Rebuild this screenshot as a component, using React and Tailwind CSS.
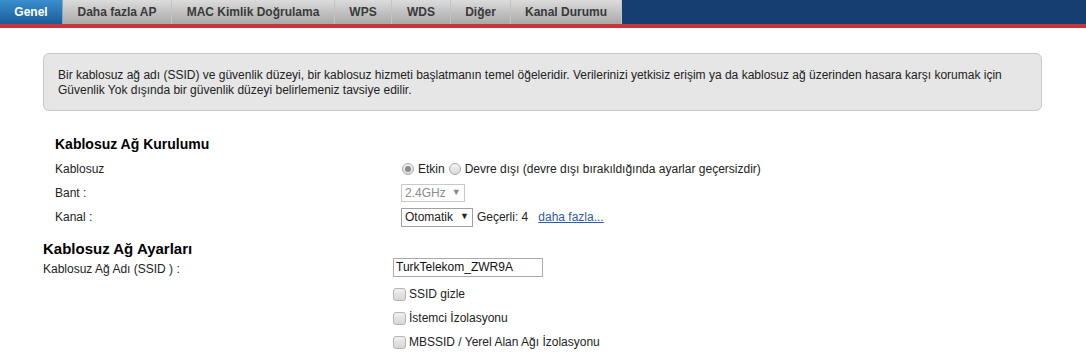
import React from "react";

const tabs = [
    { label: "Genel", w: "w-[63px]", active: true },
    { label: "Daha fazla AP", w: "w-[109px]" },
    { label: "MAC Kimlik Doğrulama", w: "w-[163px]" },
    { label: "WPS", w: "w-[57px]" },
    { label: "WDS", w: "w-[59px]" },
    { label: "Diğer", w: "w-[60px]" },
    { label: "Kanal Durumu", w: "w-[111px]" },
];

function Radio({ checked }) {
    return (
        <span className="inline-flex items-center justify-center w-[12px] h-[12px] rounded-full border border-[#a9a9a9] bg-gradient-to-b from-[#f4f4f4] to-[#d9d9d9]">
            {checked && <span className="w-[6px] h-[6px] rounded-full bg-[#8c8c8c]" />}
        </span>
    );
}

function Checkbox({ label }) {
    return (
        <div className="flex items-center h-[24px]">
            <span className="w-[13px] h-[13px] rounded-[3px] border border-[#b5b5b5] bg-gradient-to-b from-[#f0f0f0] to-[#d6d6d6] mr-[3px]" />
            <span>{label}</span>
        </div>
    );
}

export default function App() {
    return (
        <div className="w-[1086px] h-[360px] bg-white text-[12px] text-[#333] overflow-hidden" style={{ fontFamily: "Arial, 'Liberation Sans', sans-serif" }}>
            <div className="flex h-[24px] bg-[#163e6f]">
                {tabs.map((t, i) => (
                    <div
                        key={i}
                        className={
                            t.active
                                ? `${t.w} flex items-center justify-center font-bold text-white bg-gradient-to-b from-[#3a8fcf] to-[#1b5c97] border-r border-[#8aa6bf]`
                                : `${t.w} flex items-center justify-center font-bold text-[#3a3a3a] bg-gradient-to-b from-[#dcdcdc] to-[#a9a9a9] border-r border-[#c4c4c4]`
                        }
                    >
                        {t.label}
                    </div>
                ))}
            </div>
            <div className="h-[4px] bg-[#c9343a]" />

            <div className="pl-[43px] pr-[44px] pt-[25px]">
                <div className="rounded-[6px] border border-[#c8c8c8] bg-[#e6e6e6] px-[14px] pt-[14px] pb-[12px] h-[58px] leading-[15px] text-[#222]">
                    <p>Bir kablosuz ağ adı (SSID) ve güvenlik düzeyi, bir kablosuz hizmeti başlatmanın temel öğeleridir. Verilerinizi yetkisiz erişim ya da kablosuz ağ üzerinden hasara karşı korumak için</p>
                    <p>Güvenlik Yok dışında bir güvenlik düzeyi belirlemeniz tavsiye edilir.</p>
                </div>
            </div>

            <div className="pl-[55px] pt-[24px] text-[#222]">
                <h3 className="font-bold text-[14px] text-black h-[18px] leading-[18px]">Kablosuz Ağ Kurulumu</h3>
                <div className="flex items-center h-[24px] mt-[4px]">
                    <span className="w-[347px]">Kablosuz</span>
                    <span className="flex items-center gap-[4px]">
                        <Radio checked />
                        <span>Etkin</span>
                        <Radio />
                        <span>Devre dışı (devre dışı bırakıldığında ayarlar geçersizdir)</span>
                    </span>
                </div>
                <div className="flex items-center h-[24px]">
                    <span className="w-[346px]">Bant :</span>
                    <span className="flex items-center h-[18px] border border-[#c9c9c9] px-[3px] text-[#8a8a8a] bg-white">
                        2.4GHz <span className="ml-[6px] text-[9px]">▼</span>
                    </span>
                </div>
                <div className="flex items-center h-[24px]">
                    <span className="w-[346px]">Kanal :</span>
                    <span className="flex items-center h-[19px] border border-[#a0a0a0] px-[3px] text-[#222] bg-white">
                        Otomatik <span className="ml-[7px] text-[9px]">▼</span>
                    </span>
                    <span className="ml-[4px]">Geçerli: 4</span>
                    <a href="#" className="ml-[10px] text-[#2c5ca8] underline">daha fazla...</a>
                </div>
            </div>

            <div className="pl-[43px] pt-[11px] text-[#222]">
                <h3 className="font-bold text-[15px] text-black h-[18px] leading-[18px]">Kablosuz Ağ Ayarları</h3>
                <div className="flex items-center h-[21px]">
                    <span className="w-[350px]">Kablosuz Ağ Adı (SSID ) :</span>
                    <span className="flex items-center h-[19px] w-[150px] border border-[#a9a9a9] px-[2px] bg-white text-[#111] -mt-[3px]">TurkTelekom_ZWR9A</span>
                </div>
                <div className="pl-[350px] pt-[3px]">
                    <Checkbox label="SSID gizle" />
                    <Checkbox label="İstemci İzolasyonu" />
                    <Checkbox label="MBSSID / Yerel Alan Ağı İzolasyonu" />
                </div>
            </div>
        </div>
    );
}
